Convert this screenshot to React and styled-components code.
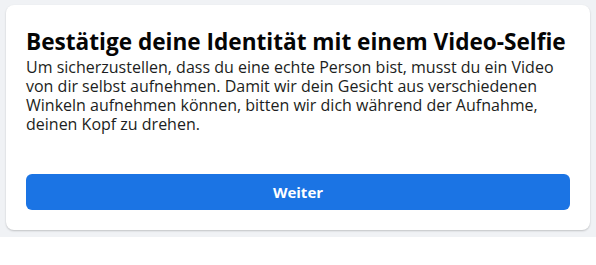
import React from "react";
import styled, { createGlobalStyle } from "styled-components";

const Global = createGlobalStyle`
  html, body { margin: 0; padding: 0; background: #ffffff; }
  body { font-family: "Open Sans", "Noto Sans", sans-serif; }
`;

const Page = styled.div`
  background: #f0f2f5;
  padding: 5px 6px 7px 6px;
`;

const Card = styled.div`
  background: #ffffff;
  border-radius: 8px;
  box-shadow: 0 1px 2px rgba(0, 0, 0, 0.2);
  padding: 23px 20px 20px 20px;
  display: flex;
  flex-direction: column;
`;

const Title = styled.h2`
  margin: 0;
  font-size: 22.6px;
  line-height: 28px;
  font-weight: 700;
  color: #050505;
`;

const Body = styled.p`
  margin: 2px 0 0 0;
  font-size: 16px;
  line-height: 19px;
  color: #1c1e21;
`;

const Button = styled.button`
  margin-top: 40px;
  height: 36px;
  border: none;
  border-radius: 6px;
  background: #1b74e4;
  color: #ffffff;
  font-family: inherit;
  font-size: 15px;
  font-weight: 700;
  cursor: pointer;
`;

export default function App() {
  return (
    <>
      <Global />
      <Page>
        <Card>
          <Title>Bestätige deine Identität mit einem Video-Selfie</Title>
          <Body>
            Um sicherzustellen, dass du eine echte Person bist, musst du ein Video
            von dir selbst aufnehmen. Damit wir dein Gesicht aus verschiedenen
            Winkeln aufnehmen können, bitten wir dich während der Aufnahme,
            deinen Kopf zu drehen.
          </Body>
          <Button>Weiter</Button>
        </Card>
      </Page>
    </>
  );
}
